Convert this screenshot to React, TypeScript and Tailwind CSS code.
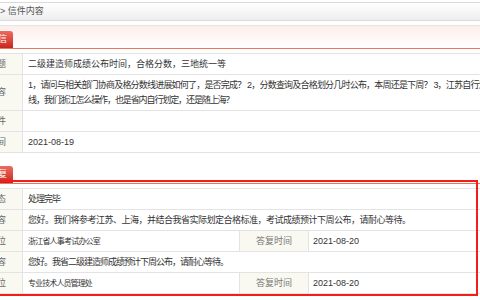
import React from 'react';

type Cell = {
  label: string;
  value: React.ReactNode;
  cls?: string;
  extra?: { label: string; value: string };
};

const font = { fontFamily: '"Liberation Sans", "Noto Sans CJK SC", sans-serif' };

const letterRows: Cell[] = [
  { label: '来信标题', value: '二级建造师成绩公布时间，合格分数，三地统一等' },
  {
    label: '来信内容',
    cls: 'tracking-[-0.8px]',
    value: (
      <>
        <span className="whitespace-nowrap">1，请问与相关部门协商及格分数线进展如何了，是否完成？ 2，分数查询及合格划分几时公布，本周还是下周？ 3，江苏自行划定分数</span>
        <br />
        <span className="tracking-[-1.1px]">线，我们浙江怎么操作，也是省内自行划定，还是随上海？</span>
      </>
    ),
  },
  { label: '来信附件', value: '' },
  { label: '来信时间', value: '2021-08-19' },
];

const replyRows: Cell[] = [
  { label: '处理状态', value: '处理完毕', cls: 'tracking-[-1px]' },
  {
    label: '答复内容',
    value: '您好。我们将参考江苏、上海，并结合我省实际划定合格标准，考试成绩预计下周公布，请耐心等待。',
    cls: 'tracking-[-0.5px]',
  },
  {
    label: '答复单位',
    value: '浙江省人事考试办公室',
    cls: 'text-[8px] tracking-[-0.8px]',
    extra: { label: '答复时间', value: '2021-08-20' },
  },
  { label: '答复内容', value: '您好。我省二级建造师成绩预计下周公布，请耐心等待。', cls: 'tracking-[-1px]' },
  {
    label: '答复单位',
    value: '专业技术人员管理处',
    cls: 'text-[8px] tracking-[-0.9px]',
    extra: { label: '答复时间', value: '2021-08-20' },
  },
];

const SectionHead: React.FC<{ title: string; className?: string }> = ({ title, className = '' }) => (
  <div className={`h-[24px] flex items-end pl-[29px] border-b border-[#e8785c] bg-gradient-to-b from-[#fcefeb] to-white ${className}`}>
    <div className="h-[17px] px-[6px] flex items-center rounded-tr-[3px] bg-gradient-to-b from-[#ec6a60] to-[#c8231f] text-white text-[9px]">
      {title}
    </div>
  </div>
);

const Table: React.FC<{ rows: Cell[] }> = ({ rows }) => (
  <div className="mt-[4px] border-t border-[#e3e3e3]">
    {rows.map((row, i) => (
      <div key={i} className="flex border-b border-[#e3e3e3] text-[9px] leading-[15px]">
        <div className="w-[69px] shrink-0 flex items-center justify-center bg-[#f9f9f1] border-r border-[#e3e3e3] text-[#666]">
          {row.label}
        </div>
        {row.extra ? (
          <>
            <div className="w-[217px] shrink-0 pl-[5px] pt-[3px] pb-[2px] text-[#333] border-r border-[#e3e3e3] flex items-center">
              <span className={row.cls}>{row.value}</span>
            </div>
            <div className="w-[69px] shrink-0 flex items-center justify-center bg-[#f9f9f1] border-r border-[#e3e3e3] text-[#777]">
              {row.extra.label}
            </div>
            <div className="flex-1 pl-[4px] pt-[3px] pb-[2px] text-[#333]">{row.extra.value}</div>
          </>
        ) : (
          <div className="flex-1 min-h-[20px] pl-[5px] pt-[3px] pb-[2px] text-[#333]">
            <span className={row.cls}>{row.value}</span>
          </div>
        )}
      </div>
    ))}
  </div>
);

export default function App() {
  return (
    <div className="relative w-[480px] h-[300px] overflow-hidden bg-white" style={font}>
      {/* breadcrumb */}
      <div className="mt-[2px] h-[19px] border-y border-[#dadada] bg-gradient-to-b from-white to-[#eeeeee] flex items-center text-[9px] text-[#555] whitespace-nowrap">
        &gt; 信件内容
      </div>

      <div className="-ml-[46px] w-[620px]">
        <SectionHead title="来信" className="mt-[4px] border-t border-t-[#e6e6e6]" />
        <Table rows={letterRows} />

        <SectionHead title="答复" className="mt-[7px] from-white" />
        <Table rows={replyRows} />
      </div>

      {/* highlight frame over the reply block */}
      <div className="absolute left-[-10px] top-[180px] w-[488px] h-[116px] border-2 border-[#f21d1d] pointer-events-none" />
    </div>
  );
}
